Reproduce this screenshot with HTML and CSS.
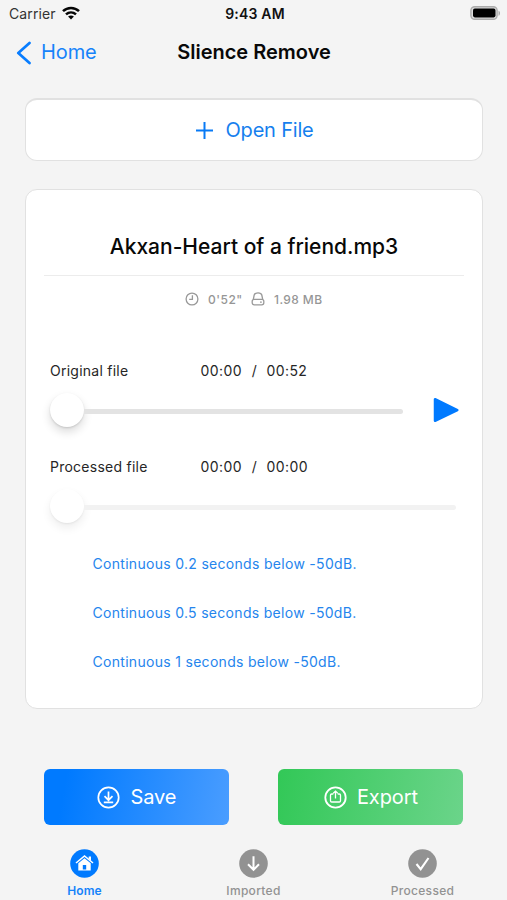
FILE: index.html
```html
<!DOCTYPE html>
<html lang="en">
<head>
<meta charset="utf-8">
<title>Slience Remove</title>
<link rel="stylesheet" href="styles.css">
</head>
<body>
<div class="app">
  <header class="status">
    <div class="carrier"><span class="carrier-name">Carrier</span>
      <svg width="18" height="14" viewBox="0 0 18 14" fill="none" stroke="#050505" stroke-width="2.5"><path d="M1 5.2C5.500 .8 12.500.8 17 5.200M4 8.400c2.900-2.700 7.100-2.700 10 0"/><path d="M9 13.500 6.100 10.600c1.700-1.500 4.100-1.500 5.800 0z" fill="#050505" stroke="none"/></svg>
    </div>
    <span class="clock">9:43 AM</span>
    <svg class="battery" width="31" height="14" viewBox="0 0 31 14"><rect x=".9" y=".7" width="26.200" height="12.600" rx="3.800" fill="#ddd" stroke="#ababab" stroke-width="1.400"/><rect x="3" y="2.600" width="22.500" height="8.800" rx="1.800" fill="#000"/><path d="M28.500 4.700c2 .5 2 4.500 0 5z" fill="#aaa"/></svg>
  </header>
  <nav class="nav">
    <a class="back"><svg width="16" height="24" viewBox="0 0 16 24" fill="none" stroke="#087dff" stroke-width="2.700" stroke-linecap="round" stroke-linejoin="round"><path d="M13.500 1.900 2.300 12l11.200 10.100"/></svg><span class="back-label">Home</span></a>
    <h1 class="title">Slience Remove</h1>
  </nav>
  <button class="card open"><svg width="17" height="17" viewBox="0 0 17 17" stroke="#087af5" stroke-width="2"><path d="M8.500 0v17M0 8.500h17"/></svg><span class="open-label">Open File</span></button>
  <main class="card player">
    <h2 class="filename">Akxan-Heart of a friend.mp3</h2>
    <div class="meta">
      <svg class="meta-icon" width="14" height="14" viewBox="0 0 14 14" fill="none" stroke="#999" stroke-width="1.300"><circle cx="7" cy="7" r="5.900"/><path d="M7.400 3.300v4H4.200"/></svg>
      <span class="duration">0'52"</span>
      <svg class="meta-icon" width="14" height="14" viewBox="0 0 14 14" fill="none" stroke="#999" stroke-width="1.300"><path d="M2.300 7.400 3.200 3Q3.700.9 7 .9T10.800 3l.9 4.400"/><rect x="1.200" y="7.300" width="11.600" height="5.500" rx="2"/><path d="M9 10.200h1.800"/></svg>
      <span class="size">1.98 MB</span>
    </div>
    <div class="labels first"><span class="track-name original">Original file</span><span class="time">00:00</span><span class="slash">/</span><span class="time">00:52</span></div>
    <div class="slider-row"><div class="slider"><i class="thumb"></i><i class="rail"></i></div><svg class="play" width="26" height="26" viewBox="0 0 26 26"><path d="M2 2.200v21.600L24.300 13z" fill="#007aff" stroke="#007aff" stroke-width="2.500" stroke-linejoin="round"/></svg></div>
    <div class="labels second"><span class="track-name processed">Processed file</span><span class="time">00:00</span><span class="slash">/</span><span class="time">00:00</span></div>
    <div class="slider-row"><div class="slider disabled"><i class="thumb"></i><i class="rail"></i></div></div>
    <ul class="presets"><li>Continuous 0.2 seconds below -50dB.</li><li>Continuous 0.5 seconds below -50dB.</li><li>Continuous 1 seconds below -50dB.</li></ul>
  </main>
  <div class="actions">
    <button class="action save"><svg width="23" height="23" viewBox="0 0 23 23" fill="none" stroke="#fff" stroke-width="1.700"><circle cx="11.500" cy="11.500" r="10.200"/><path d="M11.500 5.500v8.500M7.500 10.200l4 4 4-4M6.800 16.300h9.400"/></svg><span class="save-label">Save</span></button>
    <button class="action export"><svg width="23" height="23" viewBox="0 0 23 23" fill="none" stroke="#fff" stroke-width="1.800"><circle cx="11.500" cy="11.500" r="10.200"/><path stroke-width="1.300" d="M9.300 8H7.700q-1.200 0-1.200 1.200v5.600q0 1.200 1.200 1.200h7.600q1.200 0 1.200-1.200V9.200q0-1.200-1.200-1.200h-1.600M11.500 12.500V5.500M9.300 7.300l2.200-2.200 2.200 2.200"/></svg><span class="export-label">Export</span></button>
  </div>
  <footer class="tabs">
    <a class="tab active"><svg width="29" height="29" viewBox="0 0 29 29"><circle cx="14.500" cy="14.500" r="14.300" fill="#007aff"/><path d="M6 14 14.500 7 23 14" fill="none" stroke="#fff" stroke-width="1.600"/><path d="M18.700 7.500H21v4.200l-2.300-2zM8.300 14.200l6.200-5 6.200 5v7.300H8.300zM12.800 16v4.500h3.400V16z" fill="#fff" fill-rule="evenodd"/></svg><span class="tab-home">Home</span></a>
    <a class="tab"><svg width="29" height="29" viewBox="0 0 29 29"><circle cx="14.500" cy="14.500" r="14.300" fill="#929292"/><path d="M14.500 7.300v13M9 15.300l5.500 5.500 5.500-5.500" fill="none" stroke="#fff" stroke-width="2"/></svg><span class="tab-imported">Imported</span></a>
    <a class="tab"><svg width="29" height="29" viewBox="0 0 29 29"><circle cx="14.500" cy="14.500" r="14.300" fill="#929292"/><path d="M8.500 15l4.200 5.200L20.500 9" fill="none" stroke="#fff" stroke-width="2.100"/></svg><span class="tab-processed">Processed</span></a>
  </footer>
</div>
</body>
</html>
```
FILE: styles.css
```css
* { box-sizing: border-box; margin: 0; padding: 0; }
body { background: #f4f4f4; font-family: Inter, sans-serif; color: #111; }
svg { display: block; flex: none; }
span { white-space: nowrap; }
button { font: inherit; border: 0; }
.app { width: 507px; height: 900px; display: flex; flex-direction: column; overflow: hidden; }
.status { height: 28px; display: grid; grid-template-columns: 1fr auto 1fr; align-items: center; padding: 0 6px 0 9px; }
.carrier { display: flex; align-items: center; gap: 6px; font-size: 14px; padding-bottom: 2px; }
.carrier-name { width: 47px; color: #333; letter-spacing: .1px; }
.clock { font-size: 14px; font-weight: 600; letter-spacing: .2px; padding-bottom: 1px; }
.battery { justify-self: end; margin-bottom: 2px; }
.nav { height: 70px; padding: 0 16px; display: grid; grid-template-columns: 1fr auto 1fr; align-items: start; line-height: 49px; }
.back { display: flex; align-items: center; gap: 9px; color: #1683fa; font-size: 20px; letter-spacing: -.1px; }
.title { font-size: 20px; font-weight: 600; color: #080808; padding-left: 1px; }
.card { background: #fff; border: 1px solid #e1e1e1; border-radius: 12px; width: 458px; margin-left: 25px; flex: none; }
.open { height: 63px; border-top-width: 2px; display: flex; align-items: center; justify-content: center; gap: 13px; color: #167fee; font-size: 20px; padding-left: 1px; }
.open-label { letter-spacing: -.2px; }
.player { height: 520px; margin-top: 28px; padding: 0 18px; }
.filename { height: 86px; padding-top: 43px; border-bottom: 1px solid #ececec; text-align: center; font-size: 21px; line-height: 28px; font-weight: 500; color: #080808; white-space: nowrap; }
.meta { height: 46px; display: flex; align-items: center; padding-left: 141px; color: #969696; font-size: 12px; font-weight: 500; }
.duration { margin-left: 9px; width: 43px; letter-spacing: .5px; }
.size { margin-left: 9px; letter-spacing: .4px; }
.labels { display: flex; padding-left: 6px; font-size: 14px; line-height: 20px; color: #262626; letter-spacing: .25px; }
.first { margin-top: 39px; }
.second { margin-top: 27px; }
.track-name { width: 150.500px; }
.time { width: 42px; letter-spacing: .4px; }
.slash { width: 24px; text-align: center; }
.slider-row { display: flex; align-items: center; height: 40px; margin-top: 9px; padding-left: 6px; }
.second + .slider-row { margin-top: 9px; }
.slider { display: flex; align-items: center; width: 353px; height: 40px; }
.thumb { width: 34px; height: 34px; flex: none; border-radius: 50%; background: #fff; box-shadow: 0 5px 10px rgba(0,0,0,.14), 0 1px 2px rgba(0,0,0,.13); }
.rail { flex: 1; height: 5px; margin-top: 2px; background: #e3e3e3; border-radius: 0 3px 3px 0; }
.disabled { width: 406px; }
.disabled .rail { background: #f2f2f2; }
.disabled .thumb { box-shadow: 0 5px 10px rgba(0,0,0,.07), 0 1px 2px rgba(0,0,0,.06); }
.play { margin-left: 30px; }
.presets { list-style: none; margin-top: 28px; padding-left: 48.500px; color: #2585ed; font-size: 14px; line-height: 20px; display: flex; flex-direction: column; gap: 29px; letter-spacing: .3px; }
.actions { display: flex; gap: 49px; padding-left: 44.400px; margin-top: 60px; }
.action { width: 185px; height: 56px; border-radius: 6px; display: flex; align-items: center; justify-content: center; gap: 10px; color: #fff; font-size: 20px; }
.save { background: linear-gradient(100deg, #007aff 12%, #4a9dff); }
.export { background: linear-gradient(100deg, #32c857, #6bd48a); }
.save-label, .export-label { letter-spacing: -.1px; }
.tabs { display: flex; padding-top: 24px; }
.tab { width: 169px; display: flex; flex-direction: column; align-items: center; gap: 5px; color: #929292; font-size: 12px; font-weight: 500; line-height: 16px; letter-spacing: .3px; }
.active { color: #1683fa; font-weight: 600; letter-spacing: .1px; }
```
